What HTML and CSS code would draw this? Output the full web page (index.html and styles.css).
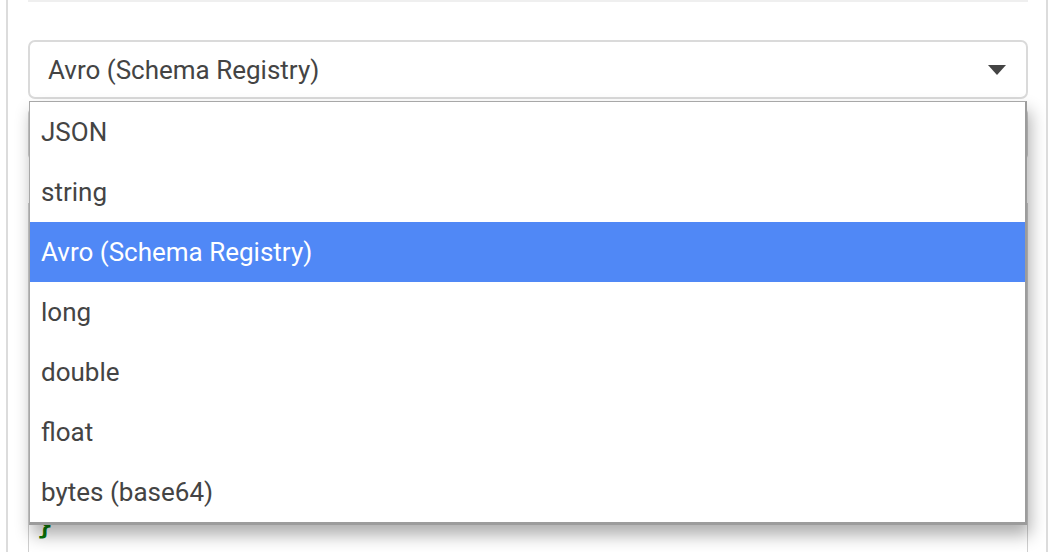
FILE: index.html
```html
<!DOCTYPE html>
<html>
<head>
<meta charset="utf-8">
<link rel="stylesheet" href="styles.css">
</head>
<body>
<div class="panel">
  <div class="divider"></div>
  <div class="field">
    <div class="select">
      <span class="select-value">Avro (Schema Registry)</span>
      <svg class="caret" width="18" height="10" viewBox="0 0 18 10"><path d="M0 0h18L9 10z" fill="#444"/></svg>
    </div>
    <div class="menu">
      <div class="opt">JSON</div>
      <div class="opt">string</div>
      <div class="opt sel">Avro (Schema Registry)</div>
      <div class="opt">long</div>
      <div class="opt">double</div>
      <div class="opt">float</div>
      <div class="opt">bytes (base64)</div>
    </div>
  </div>
  <div class="toolbar"></div>
  <div class="editor">
    <pre class="code">}</pre>
  </div>
</div>
</body>
</html>
```
FILE: styles.css
```css
html, body {
  margin: 0;
  padding: 0;
  background: #fff;
  overflow: hidden;
}
body {
  font-family: Roboto, "Liberation Sans", sans-serif;
  color: #444;
  width: 1056px;
  height: 552px;
}
.panel {
  margin-left: 6px;
  height: 552px;
  border-left: 2px solid #dcdcdc;
  border-right: 2px solid #dcdcdc;
  padding: 0 18px 0 20px;
  box-sizing: content-box;
  width: 1000px;
  overflow: hidden;
}
.divider {
  height: 2px;
  background: #efefef;
  margin-bottom: 38px;
}
.field {
  position: relative;
}
.select {
  height: 59px;
  box-sizing: border-box;
  border: 2px solid #dadada;
  border-radius: 7px;
  display: flex;
  align-items: center;
  justify-content: space-between;
  padding: 0 20px 0 18px;
  font-size: 26px;
  color: #444;
}
.caret {
  display: block;
}
.menu {
  position: absolute;
  top: 61px;
  left: 1px;
  width: 998px;
  box-sizing: border-box;
  background: #fff;
  border: 1px solid #a8a8a8;
  border-right: 2px solid #9c9c9c;
  border-bottom: 3px solid #9c9c9c;
  box-shadow: 3px 10px 16px rgba(0, 0, 0, 0.32);
  z-index: 5;
}
.opt {
  height: 60px;
  display: flex;
  align-items: center;
  padding-left: 11px;
  font-size: 26px;
  color: #444;
}
.opt.sel {
  background: #5088f6;
  color: #fff;
}
.toolbar {
  margin-top: 10px;
  height: 50px;
  box-sizing: border-box;
  border: 1px solid #cfcfcf;
  border-radius: 4px;
}
.editor {
  margin-top: 44px;
  height: 400px;
  box-sizing: border-box;
  border: 1px solid #cfcfcf;
  padding: 306px 8px 0;
}
.code {
  margin: 0;
  font-family: "DejaVu Sans Mono", monospace;
  font-size: 26px;
  line-height: 30px;
  font-weight: bold;
  color: #0a7a0a;
}
```
